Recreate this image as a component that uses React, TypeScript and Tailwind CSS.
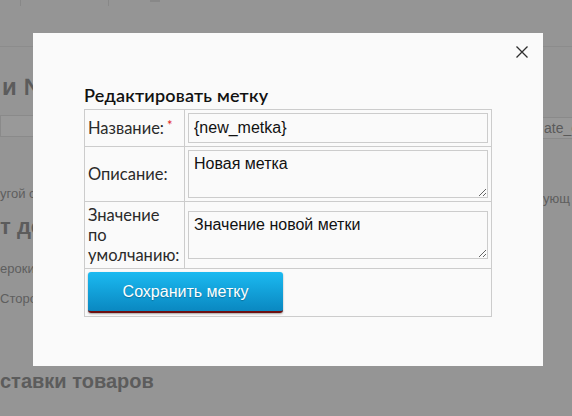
import React from "react";

const labelFont = { fontFamily: 'Lato, "Noto Sans", sans-serif' };
const arial = { fontFamily: '"Liberation Sans", Arial, sans-serif' };

export default function App() {
  return (
    <div className="relative w-[572px] h-[416px] overflow-hidden bg-[#959595]" style={arial}>
      {/* background page (dimmed) */}
      <div className="h-[47px] border-b border-[#8c8c8c] flex items-start">
        <div className="ml-[20px] w-px h-[6px] bg-[#888]" />
        <div className="ml-[87px] w-px h-[6px] bg-[#888]" />
        <div className="ml-[41px] w-[10px] h-[2px] bg-[#888]" />
      </div>
      <div className="flex">
        <div className="w-[33px] overflow-hidden flex flex-col">
          <div className="mt-[26px] pl-[2px] text-[24px] font-bold leading-[28px] text-[#5c5c5c] whitespace-nowrap">и №</div>
          <div className="mt-[14px] w-[60px] h-[22px] bg-[#999999] border border-[#8a8a8a]" />
          <div className="mt-[49px] text-[13px] leading-[16px] text-[#5e5e5e] whitespace-nowrap">угой с</div>
          <div className="mt-[12px] text-[22px] font-bold leading-[26px] text-[#5c5c5c] whitespace-nowrap">т до</div>
          <div className="mt-[21px] text-[13px] leading-[16px] text-[#5e5e5e] whitespace-nowrap">ероки,</div>
          <div className="mt-[14px] text-[13px] leading-[16px] text-[#5e5e5e] whitespace-nowrap">Сторо</div>
        </div>
        <div className="ml-auto w-[29px] overflow-hidden flex flex-col">
          <div className="mt-[70px] w-[60px] h-[22px] bg-[#999999] border-y border-[#8a8a8a] pl-[1px] text-[14px] leading-[20px] text-[#5a5a5a] whitespace-nowrap">ate_c</div>
          <div className="mt-[52px] text-[13px] leading-[16px] text-[#5e5e5e] whitespace-nowrap">ующ</div>
        </div>
      </div>
      <div className="mt-[62px] text-[20px] font-bold leading-[24px] text-[#5c5c5c] whitespace-nowrap">ставки товаров</div>

      {/* modal */}
      <div className="absolute left-[33px] top-[33px] w-[510px] h-[333px] bg-[#fafafa] pl-[51px] pt-[48px]">
        <button className="absolute left-[483px] top-[13px] w-[12px] h-[12px]">
          <svg width="12" height="12" viewBox="0 0 12 12" className="block">
            <path d="M0.5 0.5 L11.5 11.5 M11.5 0.5 L0.5 11.5" stroke="#2e2e2e" strokeWidth="1.3" fill="none" />
          </svg>
        </button>
        <div className="text-[18px] leading-[28px] font-semibold text-[#111] tracking-[0.2px]" style={labelFont}>
          Редактировать метку
        </div>
        <table className="w-[408px] border-collapse border border-[#cccccc]">
          <tbody>
            <tr>
              <td className="w-[100px] border border-[#cccccc] p-[3px] align-middle text-[16.5px] leading-[20px] font-normal text-[#2a2a2a]" style={labelFont}>
                Название:<span className="text-[#e21d1d] text-[13px] align-top relative top-[-3px] ml-[3px]">*</span>
              </td>
              <td className="border border-[#cccccc] p-[3px]">
                <input
                  defaultValue="{new_metka}"
                  className="block w-full h-[30px] border border-[#cccccc] bg-[#fafafa] px-[5px] text-[16px] text-[#111] outline-none"
                  style={arial}
                />
              </td>
            </tr>
            <tr>
              <td className="border border-[#cccccc] p-[3px] align-middle text-[16.5px] leading-[20px] font-normal text-[#2a2a2a]" style={labelFont}>
                Описание:
              </td>
              <td className="border border-[#cccccc] p-[3px]">
                <textarea
                  defaultValue="Новая метка"
                  className="block w-full h-[48px] border border-[#cccccc] bg-[#fafafa] px-[5px] py-[4px] text-[16px] leading-[18px] text-[#111] outline-none"
                  style={arial}
                />
              </td>
            </tr>
            <tr>
              <td className="border border-[#cccccc] p-[3px] align-middle text-[16.5px] leading-[20px] font-normal text-[#2a2a2a]" style={labelFont}>
                Значение<br />по<br />умолчанию:
              </td>
              <td className="border border-[#cccccc] p-[3px] align-middle">
                <textarea
                  defaultValue="Значение новой метки"
                  className="block w-full h-[48px] border border-[#cccccc] bg-[#fafafa] px-[5px] py-[4px] text-[16px] leading-[18px] text-[#111] outline-none"
                  style={arial}
                />
              </td>
            </tr>
            <tr>
              <td colSpan={2} className="border border-[#cccccc] p-[3px] h-[47px]">
                <button
                  className="block w-[195px] h-[41px] rounded-[3px] border-b-2 border-[#6e1010] bg-gradient-to-b from-[#1bbaf1] to-[#0a88c1] text-white text-[16px] shadow-[0_1px_2px_rgba(0,0,0,0.35)]"
                  style={{ ...arial, textShadow: "0 1px 1px rgba(0,0,0,0.25)" }}
                >
                  Сохранить метку
                </button>
              </td>
            </tr>
          </tbody>
        </table>
      </div>
    </div>
  );
}
